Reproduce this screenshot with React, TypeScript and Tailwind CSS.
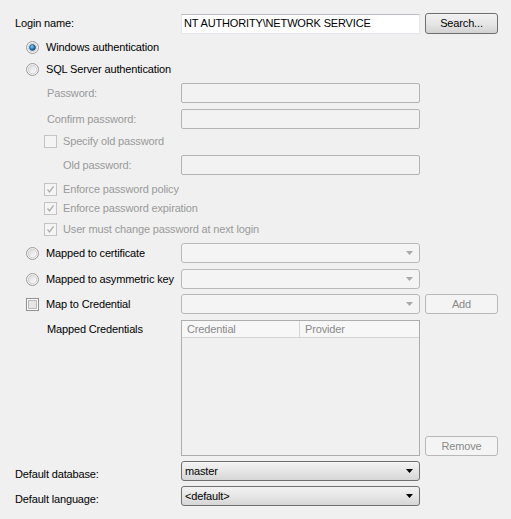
import React from 'react';

const font = { fontFamily: '"Liberation Sans", Arial, sans-serif' };

const Radio: React.FC<{ checked?: boolean }> = ({ checked }) => (
  <svg width="13" height="13" viewBox="0 0 13 13" className="shrink-0">
    <defs>
      <linearGradient id="rb" x1="0" y1="0" x2="1" y2="1">
        <stop offset="0" stopColor="#d8d8d8" />
        <stop offset="1" stopColor="#ffffff" />
      </linearGradient>
      <radialGradient id="rd" cx="0.4" cy="0.35" r="0.7">
        <stop offset="0" stopColor="#8fd4f8" />
        <stop offset="0.5" stopColor="#2c86c8" />
        <stop offset="1" stopColor="#0f3d6e" />
      </radialGradient>
    </defs>
    <circle cx="6.5" cy="6.5" r="6" fill="#f4f4f4" stroke="#9c9c9c" />
    <circle cx="6.5" cy="6.5" r="4.2" fill="url(#rb)" stroke="#c9c9c9" strokeWidth="0.8" />
    {checked && <circle cx="6.5" cy="6.5" r="3" fill="url(#rd)" stroke="#1b4f80" strokeWidth="0.6" />}
  </svg>
);

const Check: React.FC<{ checked?: boolean; disabled?: boolean }> = ({ checked, disabled }) => (
  <svg width="13" height="13" viewBox="0 0 13 13" className="shrink-0">
    <rect x="0.5" y="0.5" width="12" height="12" fill={disabled ? '#f4f4f4' : '#ffffff'} stroke={disabled ? '#c4c4c4' : '#8e8f8f'} />
    {!disabled && <rect x="2.5" y="2.5" width="8" height="8" fill="#e6e6e6" stroke="#b8b8b8" />}
    {checked && (
      <path d="M3.5 6.5 L5.5 9 L9.5 3.5" fill="none" stroke={disabled ? '#b0b0b0' : '#333'} strokeWidth="1.3" />
    )}
  </svg>
);

const Arrow: React.FC<{ dark?: boolean }> = ({ dark }) => (
  <svg width="7" height="4" viewBox="0 0 7 4" className="shrink-0">
    <path d="M0 0 H7 L3.5 4 Z" fill={dark ? '#000' : '#a8a8a8'} />
  </svg>
);

const DisabledBox = () => (
  <div className="w-[239px] h-[20px] rounded-[2px] border border-[#b3b3b3] bg-[#f2f2f2]" />
);

const DisabledCombo = () => (
  <div className="w-[239px] h-[20px] rounded-[3px] border border-[#b8b8b8] bg-[#f4f4f4] flex items-center justify-end pr-[6px]">
    <Arrow />
  </div>
);

const Combo: React.FC<{ value: string }> = ({ value }) => (
  <div className="w-[239px] h-[20px] rounded-[3px] border border-[#707070] bg-gradient-to-b from-[#f3f3f3] via-[#e6e6e6] to-[#d6d6d6] flex items-center justify-between pl-[3px] pr-[6px] text-black">
    <span>{value}</span>
    <Arrow dark />
  </div>
);

const Row: React.FC<{ h: number; children: React.ReactNode; className?: string }> = ({ h, children, className }) => (
  <div className={`flex items-center ${className ?? ''}`} style={{ height: h }}>
    {children}
  </div>
);

const Label: React.FC<{ children: React.ReactNode; pl?: string; disabled?: boolean; className?: string }> = ({ children, pl = 'pl-0', disabled, className }) => (
  <div className={`w-[166px] shrink-0 ${pl} ${disabled ? 'text-[#9a9a9a]' : 'text-black'} ${className ?? ''}`}>{children}</div>
);

export default function App() {
  return (
    <div style={font} className="w-[511px] h-[519px] bg-[#f0f0f0] pl-[15px] pt-[13px] text-[11px] leading-none tracking-[-0.15px] text-black">
      {/* login */}
      <Row h={21} className="mb-[2px]">
        <Label>Login name:</Label>
        <div className="w-[239px] h-[20px] border border-[#e2e6ea] border-t-[#b9bcc0] bg-white flex items-center pl-[2px]">
          NT AUTHORITY\NETWORK SERVICE
        </div>
        <button className="ml-[5px] w-[73px] h-[21px] rounded-[3px] border border-[#707070] bg-gradient-to-b from-[#f2f2f2] via-[#e6e6e6] to-[#d2d2d2] text-black">
          Search...
        </button>
      </Row>

      <Row h={22} className="pl-[11px] gap-[7px]">
        <Radio checked />
        <span>Windows authentication</span>
      </Row>
      <Row h={22} className="pl-[11px] gap-[7px]">
        <Radio />
        <span>SQL Server authentication</span>
      </Row>

      <Row h={26}>
        <Label pl="pl-[32px]" disabled>Password:</Label>
        <DisabledBox />
      </Row>
      <Row h={26}>
        <Label pl="pl-[32px]" disabled>Confirm password:</Label>
        <DisabledBox />
      </Row>

      <Row h={18} className="pl-[29px] gap-[6px] text-[#9a9a9a]">
        <Check disabled />
        <span>Specify old password</span>
      </Row>
      <Row h={30}>
        <Label pl="pl-[48px]" disabled>Old password:</Label>
        <DisabledBox />
      </Row>

      <Row h={18} className="pl-[29px] gap-[6px] text-[#9a9a9a]">
        <Check checked disabled />
        <span>Enforce password policy</span>
      </Row>
      <Row h={21} className="pl-[29px] gap-[6px] text-[#9a9a9a]">
        <Check checked disabled />
        <span>Enforce password expiration</span>
      </Row>
      <Row h={21} className="pl-[29px] gap-[6px] text-[#9a9a9a]">
        <Check checked disabled />
        <span>User must change password at next login</span>
      </Row>

      <Row h={26}>
        <div className="w-[166px] shrink-0 pl-[11px] flex items-center gap-[7px]">
          <Radio />
          <span>Mapped to certificate</span>
        </div>
        <DisabledCombo />
      </Row>
      <Row h={26}>
        <div className="w-[166px] shrink-0 pl-[11px] flex items-center gap-[7px]">
          <Radio />
          <span>Mapped to asymmetric key</span>
        </div>
        <DisabledCombo />
      </Row>
      <Row h={24}>
        <div className="w-[166px] shrink-0 pl-[11px] flex items-center gap-[7px]">
          <Check />
          <span>Map to Credential</span>
        </div>
        <DisabledCombo />
        <button className="ml-[5px] w-[73px] h-[20px] rounded-[3px] border border-[#b8b8b8] bg-[#f4f4f4] text-[#8a8a8a]">
          Add
        </button>
      </Row>

      {/* mapped credentials */}
      <div className="flex mt-[4px] h-[136px]">
        <div className="w-[166px] shrink-0 pl-[32px] pt-[4px]">Mapped Credentials</div>
        <div className="w-[239px] h-full border border-[#adadad] bg-[#f0f0f0] flex flex-col">
          <div className="flex h-[17px] border-b border-[#d5d5d5] bg-[#f7f7f7] text-[#8a8a8a]">
            <div className="w-[118px] border-r border-[#d5d5d5] pl-[5px] flex items-center">Credential</div>
            <div className="pl-[5px] flex items-center">Provider</div>
          </div>
        </div>
        <div className="ml-[5px] flex flex-col justify-end">
          <button className="w-[73px] h-[20px] rounded-[3px] border border-[#b8b8b8] bg-[#f4f4f4] text-[#8a8a8a]">
            Remove
          </button>
        </div>
      </div>

      <Row h={20} className="mt-[5px]">
        <Label className="mt-[7px]">Default database:</Label>
        <Combo value="master" />
      </Row>
      <Row h={20} className="mt-[5px]">
        <Label className="mt-[7px]">Default language:</Label>
        <Combo value="<default>" />
      </Row>
    </div>
  );
}
